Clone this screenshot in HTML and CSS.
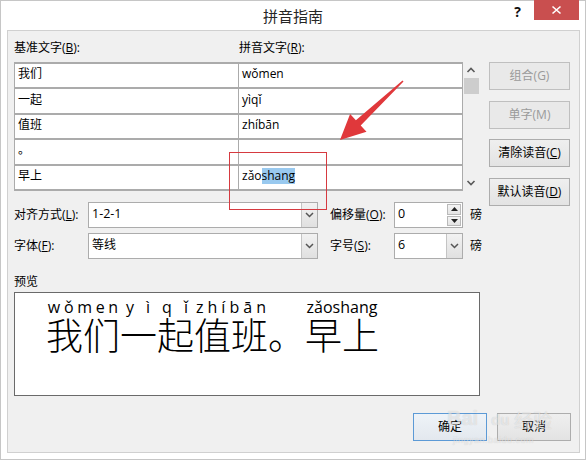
FILE: index.html
```html
<!DOCTYPE html>
<html lang="zh-CN">
<head>
<meta charset="utf-8">
<title>拼音指南</title>
<link rel="stylesheet" href="styles.css">
</head>
<body>
<div class="window">
  <div class="titlebar">
    <div class="title">拼音指南</div>
    <div class="controls">
      <div class="help">?</div>
      <div class="close">
        <svg width="45" height="20" viewBox="0 0 45 20"><path d="M18.5 6.5 L26.5 13.5 M26.5 6.5 L18.5 13.5" stroke="#fff" stroke-width="1.6" fill="none"/></svg>
      </div>
    </div>
  </div>
  <div class="client">
    <div class="main">
      <div class="left">
        <div class="labels"><span>基准文字(<u>B</u>):</span><span>拼音文字(<u>R</u>):</span></div>
        <div class="lists">
          <div class="grid">
            <div class="cell">我们</div><div class="cell py">wǒmen</div>
            <div class="cell">一起</div><div class="cell py">yìqǐ</div>
            <div class="cell">值班</div><div class="cell py">zhíbān</div>
            <div class="cell">。</div><div class="cell py"></div>
            <div class="cell">早上</div><div class="cell py">zǎo<span class="sel">shang</span></div>
          </div>
          <div class="scrollbar">
            <div class="sb-btn"><svg width="16" height="16" viewBox="0 0 16 16"><polyline points="4.5,10 8,6.5 11.5,10" fill="none" stroke="#5a5a5a" stroke-width="1.6"/></svg></div>
            <div class="thumb"></div>
            <div class="sb-space"></div>
            <div class="sb-btn"><svg width="16" height="16" viewBox="0 0 16 16"><polyline points="4.5,6 8,9.5 11.5,6" fill="none" stroke="#5a5a5a" stroke-width="1.6"/></svg></div>
          </div>
        </div>
        <div class="form">
          <div class="flabel">对齐方式(<u>L</u>):</div>
          <div class="combo"><div class="val">1-2-1</div><div class="drop"><svg width="9" height="6" viewBox="0 0 9 6"><polyline points="1,1 4.5,4.5 8,1" fill="none" stroke="#555" stroke-width="1.5"/></svg></div></div>
          <div class="flabel second">偏移量(<u>O</u>):</div>
          <div class="combo spin"><div class="val">0</div><div class="arrows"><div class="sp"><svg width="7" height="4" viewBox="0 0 7 4"><polygon points="0,4 3.5,0 7,4" fill="#222"/></svg></div><div class="sp"><svg width="7" height="4" viewBox="0 0 7 4"><polygon points="0,0 3.5,4 7,0" fill="#222"/></svg></div></div></div>
          <div class="unit">磅</div>

          <div class="flabel">字体(<u>F</u>):</div>
          <div class="combo"><div class="val cjk">等线</div><div class="drop"><svg width="9" height="6" viewBox="0 0 9 6"><polyline points="1,1 4.5,4.5 8,1" fill="none" stroke="#555" stroke-width="1.5"/></svg></div></div>
          <div class="flabel second">字号(<u>S</u>):</div>
          <div class="combo"><div class="val">6</div><div class="drop"><svg width="9" height="6" viewBox="0 0 9 6"><polyline points="1,1 4.5,4.5 8,1" fill="none" stroke="#555" stroke-width="1.5"/></svg></div></div>
          <div class="unit">磅</div>
        </div>
        <div class="plabel">预览</div>
        <div class="preview">
          <div class="ruby">
            <div class="rt"><span>w</span><span>ǒ</span><span>m</span><span>e</span><span>n</span></div>
            <div class="rb">我们</div>
          </div>
          <div class="ruby">
            <div class="rt"><span>y</span><span>ì</span><span>q</span><span>ǐ</span></div>
            <div class="rb">一起</div>
          </div>
          <div class="ruby">
            <div class="rt"><span>z</span><span>h</span><span>í</span><span>b</span><span>ā</span><span>n</span></div>
            <div class="rb">值班</div>
          </div>
          <div class="ruby one">
            <div class="rt"></div>
            <div class="rb">。</div>
          </div>
          <div class="ruby">
            <div class="rt"><span>zǎoshang</span></div>
            <div class="rb">早上</div>
          </div>
        </div>
      </div>
      <div class="side">
        <div class="btn disabled">组合(G)</div>
        <div class="btn disabled">单字(M)</div>
        <div class="btn">清除读音(<u>C</u>)</div>
        <div class="btn">默认读音(<u>D</u>)</div>
      </div>
    </div>
    <div class="footer">
      <div class="btn ok">确定</div>
      <div class="btn cancel">取消</div>
    </div>
  </div>
  <svg class="annot" width="586" height="460" viewBox="0 0 586 460">
    <rect x="229.5" y="152.5" width="97" height="57" fill="none" stroke="#d63a40" stroke-width="1"/>
    <polygon points="402.5,80.5 355.9,120.3 350.1,114.1 340,140 366.5,131.7 360.7,125.5 403.5,81.5" fill="#e0383b"/>
  </svg>
  <div class="watermark">
    <span class="wm-bai">Bai</span><span class="wm-du">du</span><span class="wm-jy">经验</span>
    <span class="wm-url">jingyan.baidu.com</span>
  </div>
</div>
</body>
</html>
```

FILE: styles.css
```css
* { box-sizing: border-box; }
html, body { margin: 0; padding: 0; }
body {
  width: 586px;
  height: 460px;
  overflow: hidden;
  background: #fff;
  font-family: "Open Sans", "Noto Sans CJK SC", sans-serif;
  font-size: 12px;
  color: #000;
}
.window {
  position: relative;
  width: 586px;
  height: 460px;
  border: 1px solid #c6c6c6;
  background: #fff;
  display: flex;
  flex-direction: column;
}
.titlebar {
  height: 29px;
  display: grid;
  grid-template-columns: 1fr auto 1fr;
}
.title {
  grid-column: 2;
  font-family: "Noto Sans CJK SC", sans-serif;
  font-size: 15px;
  line-height: 29px;
  color: #262626;
}
.controls {
  grid-column: 3;
  display: flex;
  justify-content: flex-end;
  align-items: flex-start;
  padding-right: 6px;
}
.help {
  font-family: "Open Sans", sans-serif;
  font-weight: 700;
  font-size: 14px;
  line-height: 22px;
  margin-right: 13px;
  color: #111;
}
.close {
  width: 45px;
  height: 20px;
  margin-top: -1px;
  background: #c94f4f;
  display: flex;
}
.client {
  flex: 1;
  margin: 0 5px 6px 6px;
  border: 1px solid #d0d0d0;
  background: #f0f0f0;
  padding: 9px 0 0 6px;
  display: flex;
  flex-direction: column;
}
.main {
  display: flex;
  align-items: flex-start;
}
.left {
  width: 466px;
}
.labels {
  display: grid;
  grid-template-columns: 225px auto;
  line-height: 16px;
  height: 16px;
}
.lists {
  display: flex;
  margin-top: 6px;
}
.grid {
  width: 449px;
  display: grid;
  grid-template-columns: 223px 223px;
  grid-auto-rows: 23.4px;
  gap: 2px 1px;
  padding: 2px 1px;
  background: #ababab;
}
.cell {
  background: #fff;
  padding: 0 0 3px 3px;
  display: flex;
  align-items: center;
  line-height: 16px;
  white-space: pre;
}
.cell.py {
  font-size: 12px;
}
.sel {
  background: #99c9ef;
  display: inline-block;
  line-height: 16px;
}
.scrollbar {
  width: 16px;
  height: 129px;
  display: flex;
  flex-direction: column;
}
.sb-btn {
  height: 16px;
  display: flex;
}
.thumb {
  height: 16px;
  margin-left: 1px;
  background: #cdcdcd;
}
.sb-space { flex: 1; }
.form {
  margin-top: 11px;
  display: grid;
  grid-template-columns: 74px 230px 76px 69px auto;
  grid-template-rows: 26px 26px;
  row-gap: 5px;
  align-items: center;
}
.flabel { line-height: 16px; }
.flabel.second { padding-left: 12px; }
.unit { padding-left: 7px; line-height: 16px; }
.combo {
  height: 26px;
  display: flex;
  border: 1px solid #acacac;
  background: #fff;
}
.combo .val {
  flex: 1;
  padding-left: 3px;
  line-height: 22px;
  font-size: 12.5px;
}
.combo .val.cjk { font-size: 12px; }
.combo .drop {
  width: 16px;
  border-left: 1px solid #c4c4c4;
  background: linear-gradient(#f2f2f2, #e0e0e0);
  display: flex;
  align-items: center;
  justify-content: center;
}
.spin .arrows {
  width: 15px;
  display: flex;
  flex-direction: column;
  padding: 1px 1px 1px 0;
  gap: 1px;
}
.spin .sp {
  flex: 1;
  border: 1px solid #b9b9b9;
  background: linear-gradient(#f4f4f4, #e4e4e4);
  display: flex;
  align-items: center;
  justify-content: center;
}
.plabel {
  margin-top: 15px;
  line-height: 16px;
}
.preview {
  margin-top: 2px;
  width: 466px;
  height: 104px;
  border: 1px solid #6a6a6a;
  background: #fff;
  padding: 5px 0 0 31px;
  display: flex;
  align-items: flex-start;
}
.ruby {
  width: 74px;
  display: flex;
  flex-direction: column;
}
.ruby.one { width: 37px; }
.rt {
  height: 18px;
  display: flex;
  justify-content: space-around;
  font-family: "Open Sans", sans-serif;
  font-size: 16px;
  line-height: 18px;
  white-space: nowrap;
}
.rb {
  font-family: "Noto Sans CJK SC", sans-serif;
  font-weight: 300;
  font-size: 37px;
  line-height: 37px;
  white-space: nowrap;
}
.side {
  margin-left: 9px;
  margin-top: 22px;
  width: 81px;
  display: flex;
  flex-direction: column;
  gap: 10.5px;
}
.btn {
  height: 28px;
  border: 1px solid #adadad;
  background: linear-gradient(#efefef, #e3e3e3);
  text-align: center;
  line-height: 26px;
  font-size: 12px;
  color: #000;
}
.btn.disabled {
  color: #9a9a9a;
  border-color: #bfbfbf;
  background: #e9e9e9;
}
.footer {
  margin-top: 17px;
  display: flex;
  justify-content: flex-end;
  gap: 10px;
  padding-right: 8px;
}
.footer .btn { width: 74px; }
.btn.ok {
  border-color: #5c9ad6;
  background: linear-gradient(#eef3f8, #e3e8ee);
}
.annot {
  position: absolute;
  left: -1px;
  top: -1px;
  pointer-events: none;
}
.watermark {
  position: absolute;
  left: 440px;
  top: 400px;
  width: 130px;
  height: 50px;
  pointer-events: none;
  font-family: "Liberation Sans", sans-serif;
  color: rgba(255, 255, 255, 0.55);
  text-shadow: 0 0 1px rgba(0, 0, 0, 0.18);
}
.wm-bai {
  position: absolute;
  left: 6px;
  top: 6px;
  font-size: 20px;
  font-weight: 700;
}
.wm-du {
  position: absolute;
  left: 50px;
  top: 10px;
  font-size: 15px;
  font-weight: 700;
}
.wm-jy {
  position: absolute;
  left: 73px;
  top: 5px;
  font-family: "Noto Sans CJK SC", sans-serif;
  font-size: 19px;
}
.wm-url {
  position: absolute;
  left: 12px;
  top: 34px;
  font-size: 9px;
  letter-spacing: 0.5px;
}
```
